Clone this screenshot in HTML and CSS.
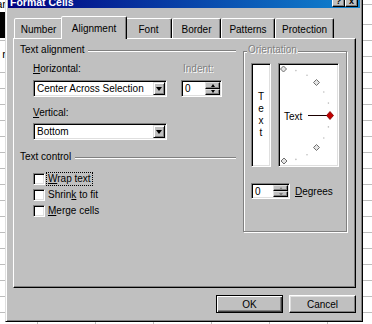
FILE: index.html
```html
<!DOCTYPE html>
<html lang="en">
<head>
  <meta charset="UTF-8">
  <meta name="viewport" content="width=device-width, initial-scale=1.0">
  <title>Format Cells</title>
  <link rel="stylesheet" href="styles.css">
</head>
<body>

  <!-- worksheet behind the dialog -->
  <div class="sheet">
    <div class="sheet-col">
      <div class="cell cell-ar">ar</div>
      <div class="cell cell-black"></div>
      <div class="cell cell-r">r</div>
    </div>
  </div>

  <div class="dialog">
    <div class="titlebar">
      <span class="title">Format Cells</span>
      <div class="title-btns">
        <span class="tbtn">?</span>
        <span class="tbtn">x</span>
      </div>
    </div>

    <div class="tabs">
      <div class="tab tab-number">Number</div>
      <div class="tab tab-align active">Alignment</div>
      <div class="tab tab-font">Font</div>
      <div class="tab tab-border">Border</div>
      <div class="tab tab-patterns">Patterns</div>
      <div class="tab tab-protect">Protection</div>
    </div>

    <div class="panel">
      <div class="left">
        <div class="section-head"><span>Text alignment</span><i class="etch"></i></div>

        <div class="field-row">
          <div class="field field-h">
            <label class="lbl"><u>H</u>orizontal:</label>
            <div class="combo">
              <span class="combo-val">Center Across Selection</span>
              <span class="drop"><i class="tri-down"></i></span>
            </div>
          </div>
          <div class="field field-indent">
            <label class="lbl disabled">Indent:</label>
            <div class="spin">
              <span class="spin-val">0</span>
              <span class="spin-btns">
                <span class="sbtn"><i class="tri-up-sm"></i></span>
                <span class="sbtn"><i class="tri-down-sm"></i></span>
              </span>
            </div>
          </div>
        </div>

        <div class="field field-v">
          <label class="lbl"><u>V</u>ertical:</label>
          <div class="combo">
            <span class="combo-val">Bottom</span>
            <span class="drop"><i class="tri-down"></i></span>
          </div>
        </div>

        <div class="section-head section-control"><span>Text control</span><i class="etch"></i></div>

        <div class="checks">
          <div class="check-row"><span class="box"></span><span class="focus"><u>W</u>rap text</span></div>
          <div class="check-row"><span class="box"></span><span>Shrin<u>k</u> to fit</span></div>
          <div class="check-row"><span class="box"></span><span><u>M</u>erge cells</span></div>
        </div>
      </div>

      <div class="group">
        <span class="group-title">Orientation</span>
        <div class="orient-row">
          <div class="vtext">
            <span>T</span><span>e</span><span>x</span><span>t</span>
          </div>
          <div class="dial">
            <svg width="57" height="100" viewBox="0 0 57 100">
              <g fill="#bdbdbd">
                <circle cx="15.9" cy="5.6" r="0.8"/>
                <circle cx="27" cy="10.2" r="0.8"/>
                <circle cx="43.8" cy="27" r="0.8"/>
                <circle cx="48.4" cy="38.1" r="0.8"/>
                <circle cx="48.4" cy="61.9" r="0.8"/>
                <circle cx="43.8" cy="73" r="0.8"/>
                <circle cx="27" cy="89.8" r="0.8"/>
                <circle cx="15.9" cy="94.4" r="0.8"/>
              </g>
              <g fill="#e4e4e4" stroke="#707070" stroke-width="1">
                <polygon points="3.5,1 6.5,4 3.5,7 0.5,4"/>
                <polygon points="36.5,14.5 39.5,17.5 36.5,20.5 33.5,17.5"/>
                <polygon points="36.5,79.5 39.5,82.5 36.5,85.5 33.5,82.5"/>
                <polygon points="4,93 7,96 4,99 1,96"/>
              </g>
              <text x="4" y="54.5" font-family="Liberation Sans, Arial, sans-serif" font-size="10" fill="#000">Text</text>
              <line x1="28" y1="50.5" x2="47" y2="50.5" stroke="#1a0000" stroke-width="1"/>
              <polygon points="50,46.5 53.5,50.5 50,54.5 46.5,50.5" fill="#c00000" stroke="#800000" stroke-width="0.8"/>
            </svg>
          </div>
        </div>
        <div class="degrees-row">
          <div class="spin spin-deg">
            <span class="spin-val">0</span>
            <span class="spin-btns">
              <span class="sbtn"><i class="tri-up-sm gray"></i></span>
              <span class="sbtn"><i class="tri-down-sm gray"></i></span>
            </span>
          </div>
          <span class="deg-label"><u>D</u>egrees</span>
        </div>
      </div>
    </div>

    <div class="actions">
      <button class="btn btn-default">OK</button>
      <button class="btn">Cancel</button>
    </div>
  </div>

</body>
</html>
```

FILE: styles.css
```css
* {
  box-sizing: border-box;
}

body {
  margin: 0;
  width: 372px;
  height: 324px;
  overflow: hidden;
  position: relative;
  font-family: "Liberation Sans", Arial, sans-serif;
  font-size: 10px;
  color: #000;
  background: #fff;
}

/* worksheet */
.sheet {
  height: 324px;
  background-image:
    repeating-linear-gradient(to bottom, transparent 0 15px, #bdbdbd 15px 16px),
    repeating-linear-gradient(to right, transparent 0 57px, #bdbdbd 57px 58px);
  background-position: 0 9px, -20px 0;
}

.sheet-col {
  width: 6px;
}

.cell {
  display: flex;
  justify-content: flex-end;
  align-items: flex-end;
  overflow: hidden;
  white-space: nowrap;
  font-size: 11px;
  line-height: 11px;
}

.cell-ar {
  height: 10px;
  background: #fff;
}

.cell-black {
  height: 26px;
  margin-top: 2px;
  background: #000;
}

.cell-r {
  height: 10px;
  margin-top: 12px;
  background: #fff;
}

/* dialog window */
.dialog {
  position: absolute;
  left: 5px;
  top: -13px;
  width: 358px;
  height: 335px;
  padding: 2px;
  background: #c0c0c0;
  border: 1px solid;
  border-color: #dfdfdf #000 #000 #dfdfdf;
  box-shadow: inset 1px 1px #fff, inset -1px -1px #808080;
  display: flex;
  flex-direction: column;
}

.titlebar {
  height: 18px;
  flex-shrink: 0;
  padding: 0 2px;
  background: linear-gradient(to right, #000080, #1084d0);
  display: flex;
  align-items: flex-end;
  justify-content: space-between;
}

.title {
  color: #fff;
  font-weight: bold;
  font-size: 10.5px;
  line-height: 12px;
}

.title-btns {
  display: flex;
  margin-bottom: 1px;
}

.tbtn {
  width: 13px;
  height: 12px;
  background: #c0c0c0;
  border: 1px solid;
  border-color: #fff #000 #000 #fff;
  box-shadow: inset -1px -1px #808080;
  font-size: 9px;
  font-weight: bold;
  line-height: 9px;
  display: flex;
  align-items: center;
  justify-content: center;
}

/* tab strip */
.tabs {
  height: 30px;
  flex-shrink: 0;
  padding: 8px 0 0 6px;
  display: flex;
  align-items: flex-end;
}

.tab {
  height: 20px;
  padding-top: 1px;
  background: #c0c0c0;
  border: 1px solid;
  border-bottom: none;
  border-color: #fff #000 transparent #fff;
  border-radius: 2px 2px 0 0;
  box-shadow: inset -1px 0 #808080;
  display: flex;
  align-items: center;
  justify-content: center;
}

.tab.active {
  height: 23px;
  padding-top: 0;
  margin: 0 -2px -1px;
  position: relative;
  z-index: 1;
}

.tab-number { width: 49px; }
.tab-align { width: 66px; }
.tab-font { width: 47px; }
.tab-border { width: 49px; }
.tab-patterns { width: 54px; }
.tab-protect { width: 59px; }

.panel {
  margin-left: 5px;
  width: 343px;
  height: 250px;
  flex-shrink: 0;
  padding: 5px 0 0 6px;
  border: 1px solid;
  border-color: #fff #000 #000 #fff;
  box-shadow: inset -1px -1px #808080;
  display: flex;
  gap: 7px;
}

/* left column */
.left {
  width: 216px;
  display: flex;
  flex-direction: column;
}

.section-head {
  height: 12px;
  line-height: 12px;
  display: flex;
  align-items: center;
}

.section-control {
  margin-top: 11px;
}

.etch {
  flex: 1;
  height: 2px;
  margin: 2px 0 0 4px;
  border-top: 1px solid #808080;
  border-bottom: 1px solid #fff;
}

.field-row {
  margin-top: 7px;
  padding-left: 13px;
  display: flex;
  gap: 14px;
}

.field {
  display: flex;
  flex-direction: column;
}

.field-h {
  width: 134px;
}

.field-indent {
  width: 41px;
}

.field-v {
  width: 147px;
  margin-top: 10px;
  padding-left: 13px;
}

.field-v .combo {
  margin-top: 4px;
}

.lbl {
  line-height: 12px;
}

.lbl.disabled {
  padding-left: 2px;
  color: #808080;
  text-shadow: 1px 1px #fff;
}

.combo,
.spin {
  margin-top: 5px;
  height: 17px;
  padding: 1px;
  background: #fff;
  border: 1px solid;
  border-color: #808080 #fff #fff #808080;
  box-shadow: inset 1px 1px #000, inset -1px -1px #dfdfdf;
  display: flex;
  align-items: center;
}

.combo-val,
.spin-val {
  flex: 1;
  padding-left: 2px;
  line-height: 13px;
  white-space: nowrap;
  overflow: hidden;
}

.drop {
  width: 12px;
  height: 13px;
  background: #c0c0c0;
  border: 1px solid;
  border-color: #dfdfdf #000 #000 #dfdfdf;
  box-shadow: inset 1px 1px #fff, inset -1px -1px #808080;
  display: flex;
  align-items: center;
  justify-content: center;
}

.tri-down {
  width: 0;
  height: 0;
  border-left: 3.5px solid transparent;
  border-right: 3.5px solid transparent;
  border-top: 4px solid #000;
}

.spin-btns {
  width: 15px;
  height: 13px;
  display: flex;
  flex-direction: column;
}

.sbtn {
  flex: 1;
  background: #c0c0c0;
  border: 1px solid;
  border-color: #dfdfdf #000 #000 #dfdfdf;
  box-shadow: inset -1px -1px #808080;
  display: flex;
  align-items: center;
  justify-content: center;
}

.tri-up-sm,
.tri-down-sm {
  width: 0;
  height: 0;
  border-left: 2.5px solid transparent;
  border-right: 2.5px solid transparent;
}

.tri-up-sm {
  border-bottom: 3px solid #000;
}

.tri-down-sm {
  border-top: 3px solid #000;
}

.tri-up-sm.gray {
  border-bottom-color: #808080;
}

.tri-down-sm.gray {
  border-top-color: #808080;
}

/* checkboxes */
.checks {
  margin-top: 6px;
  padding-left: 13px;
}

.check-row {
  height: 13px;
  margin-top: 3px;
  line-height: 12px;
  display: flex;
  align-items: center;
}

.box {
  width: 12px;
  height: 12px;
  margin-right: 3px;
  background: #fff;
  border: 1px solid;
  border-color: #808080 #fff #fff #808080;
  box-shadow: inset 1px 1px #000, inset -1px -1px #dfdfdf;
}

.focus {
  outline: 1px dotted #000;
  padding: 0 1px;
  margin-left: -1px;
}

/* orientation group */
.group {
  width: 104px;
  height: 181px;
  margin-top: 7px;
  padding-left: 7px;
  border: 1px solid #808080;
  box-shadow: inset 1px 1px #fff, 1px 1px #fff;
  display: flex;
  flex-direction: column;
}

.group-title {
  align-self: flex-start;
  margin: -8px 0 0 -4px;
  padding: 0 1px;
  line-height: 12px;
  background: #c0c0c0;
  color: #808080;
  text-shadow: 1px 1px #fff;
}

.orient-row {
  margin-top: 7px;
  display: flex;
  gap: 7px;
}

.vtext,
.dial {
  height: 104px;
  padding: 1px;
  background: #fff;
  border: 1px solid;
  border-color: #808080 #fff #fff #808080;
  box-shadow: inset 1px 1px #000, inset -1px -1px #dfdfdf;
}

.vtext {
  width: 20px;
  line-height: 12px;
  display: flex;
  flex-direction: column;
  align-items: center;
  justify-content: center;
}

.dial {
  width: 61px;
}

.dial svg {
  display: block;
}

.degrees-row {
  margin-top: 16px;
  display: flex;
  align-items: center;
}

.spin-deg {
  margin-top: 0;
  width: 39px;
  height: 16px;
}

.spin-deg .spin-btns {
  height: 12px;
}

.deg-label {
  margin-left: 5px;
}

/* bottom buttons */
.actions {
  margin-top: 7px;
  padding-right: 4px;
  display: flex;
  justify-content: flex-end;
  gap: 6px;
}

.btn {
  width: 67px;
  height: 18px;
  padding: 0;
  font-family: inherit;
  font-size: 10px;
  color: #000;
  background: #c0c0c0;
  border: 1px solid;
  border-color: #fff #000 #000 #fff;
  box-shadow: inset -1px -1px #808080, inset 1px 1px #dfdfdf;
}

.btn-default {
  border-color: #000;
  box-shadow: inset 1px 1px #fff, inset -1px -1px #404040, inset -2px -2px #808080;
}
```
